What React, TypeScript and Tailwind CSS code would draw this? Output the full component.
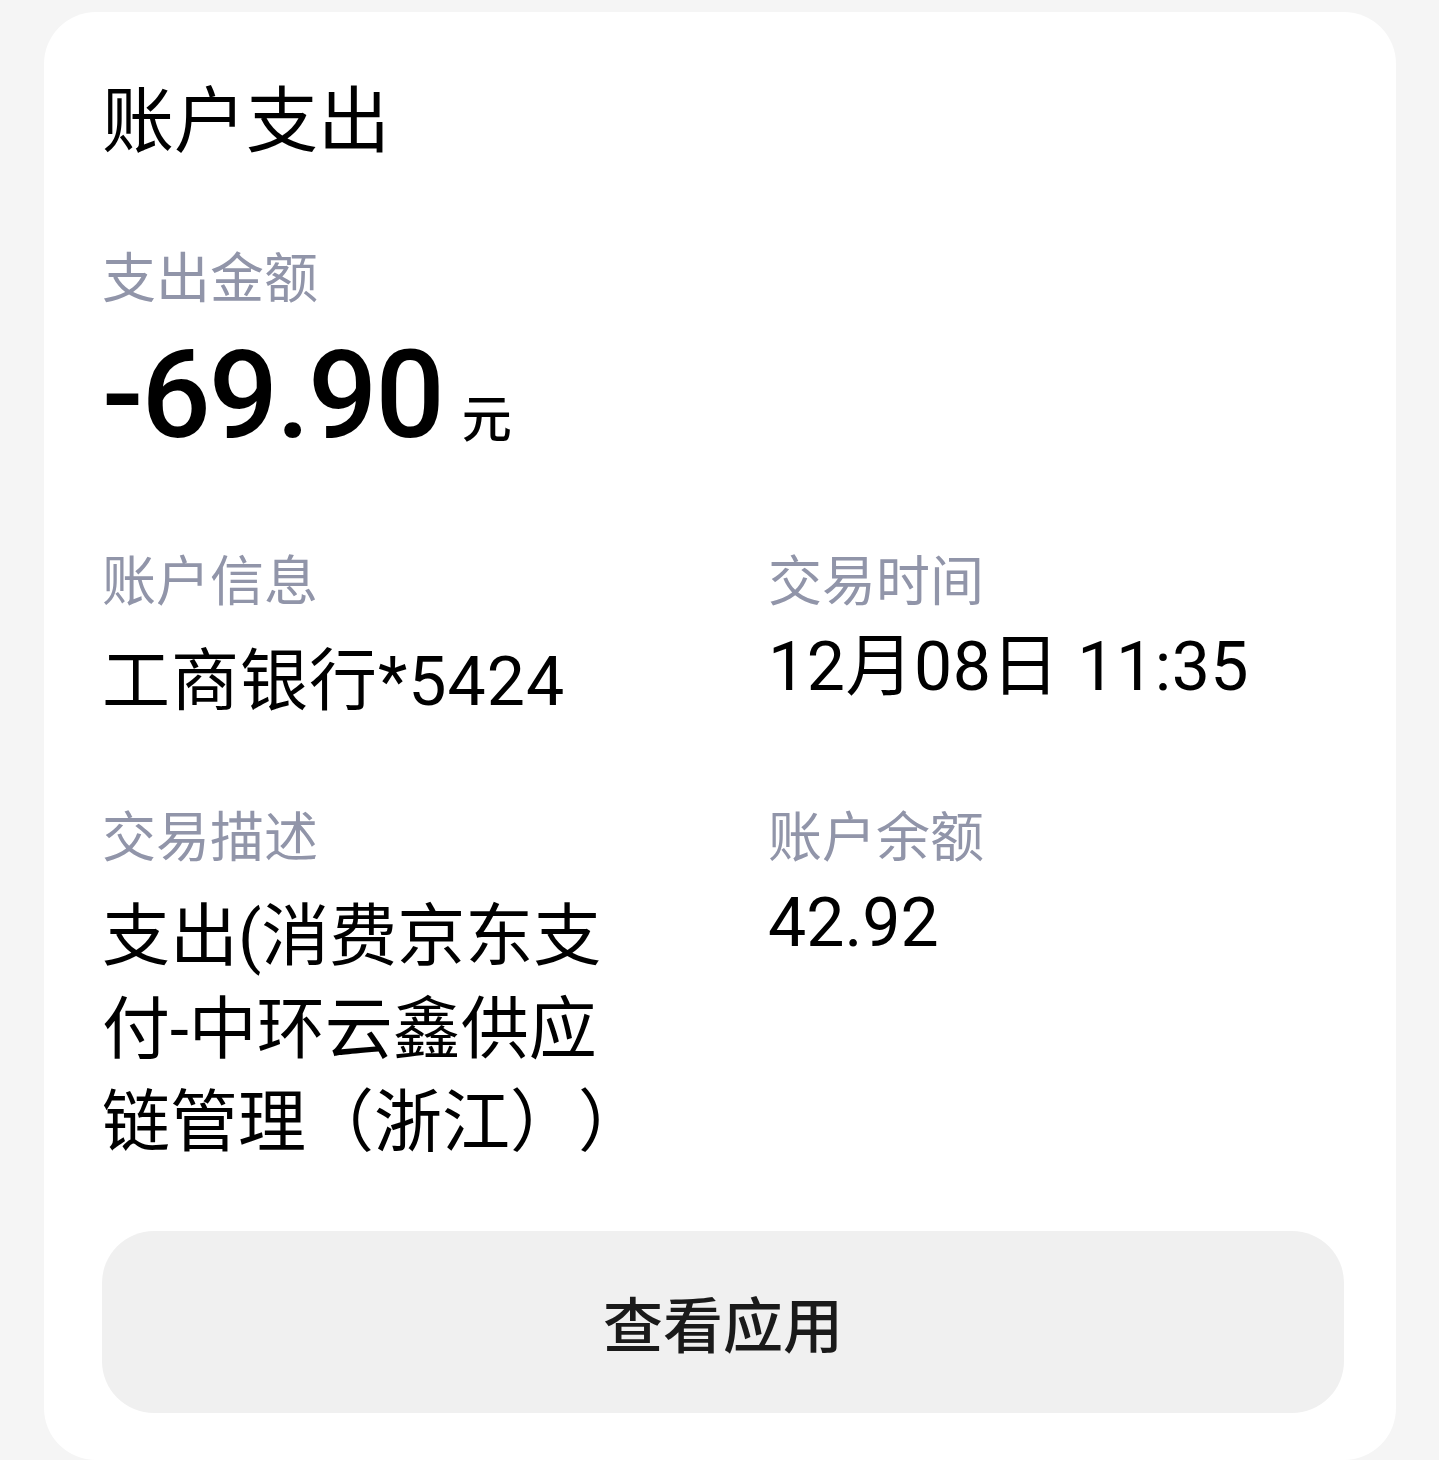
import React from "react";

function Label({ children }: { children: React.ReactNode }) {
  return (
    <div className="font-['Noto_Sans_CJK_SC',sans-serif] text-[54px] leading-[64px] text-[#9195a9]">
      {children}
    </div>
  );
}

function Value({ children, className }: { children: React.ReactNode; className: string }) {
  return (
    <div
      className={
        "font-[Roboto,'Noto_Sans_CJK_SC',sans-serif] text-[68px] leading-[92px] text-black [text-spacing-trim:space-all] " +
        className
      }
    >
      {children}
    </div>
  );
}

export default function App() {
  return (
    <div className="min-h-screen bg-[#f5f5f5] pt-[12px]">
      <div className="ml-[44px] w-[1352px] rounded-[52px] bg-white pl-[58px] pr-[52px] pt-[60px] pb-[47px]">
        <div className="font-['Noto_Sans_CJK_SC',sans-serif] text-[72px] leading-[86px] font-normal text-black">
          账户支出
        </div>

        <div className="mt-[85px]">
          <Label>支出金额</Label>
        </div>

        <div className="mt-[24px] flex items-baseline">
          <span className="font-[Roboto,sans-serif] text-[122px] leading-[130px] font-medium tracking-[-2px] text-black">
            -69.90
          </span>
          <span className="ml-[19px] font-['Noto_Sans_CJK_SC',sans-serif] text-[50px] leading-[60px] font-medium text-black">
            元
          </span>
        </div>

        <div className="mt-[85px] grid grid-cols-[666px_1fr] gap-y-[74px]">
          <div>
            <Label>账户信息</Label>
            <Value className="mt-[26px] tracking-[1px]">工商银行*5424</Value>
          </div>
          <div>
            <Label>交易时间</Label>
            <Value className="mt-[11px] tracking-[0.5px]">12月08日 11:35</Value>
          </div>
          <div>
            <Label>交易描述</Label>
            <Value className="mt-[25px] leading-[93px]">
              支出(消费京东支
              <br />
              付-中环云鑫供应
              <br />
              链管理（浙江））
            </Value>
          </div>
          <div>
            <Label>账户余额</Label>
            <Value className="mt-[11px]">42.92</Value>
          </div>
        </div>

        <button className="mt-[61px] flex h-[182px] w-full items-center justify-center rounded-[52px] bg-[#f0f0f0] font-['Noto_Sans_CJK_SC',sans-serif] text-[60px] font-medium text-[#1a1a1a]">
          查看应用
        </button>
      </div>
    </div>
  );
}
